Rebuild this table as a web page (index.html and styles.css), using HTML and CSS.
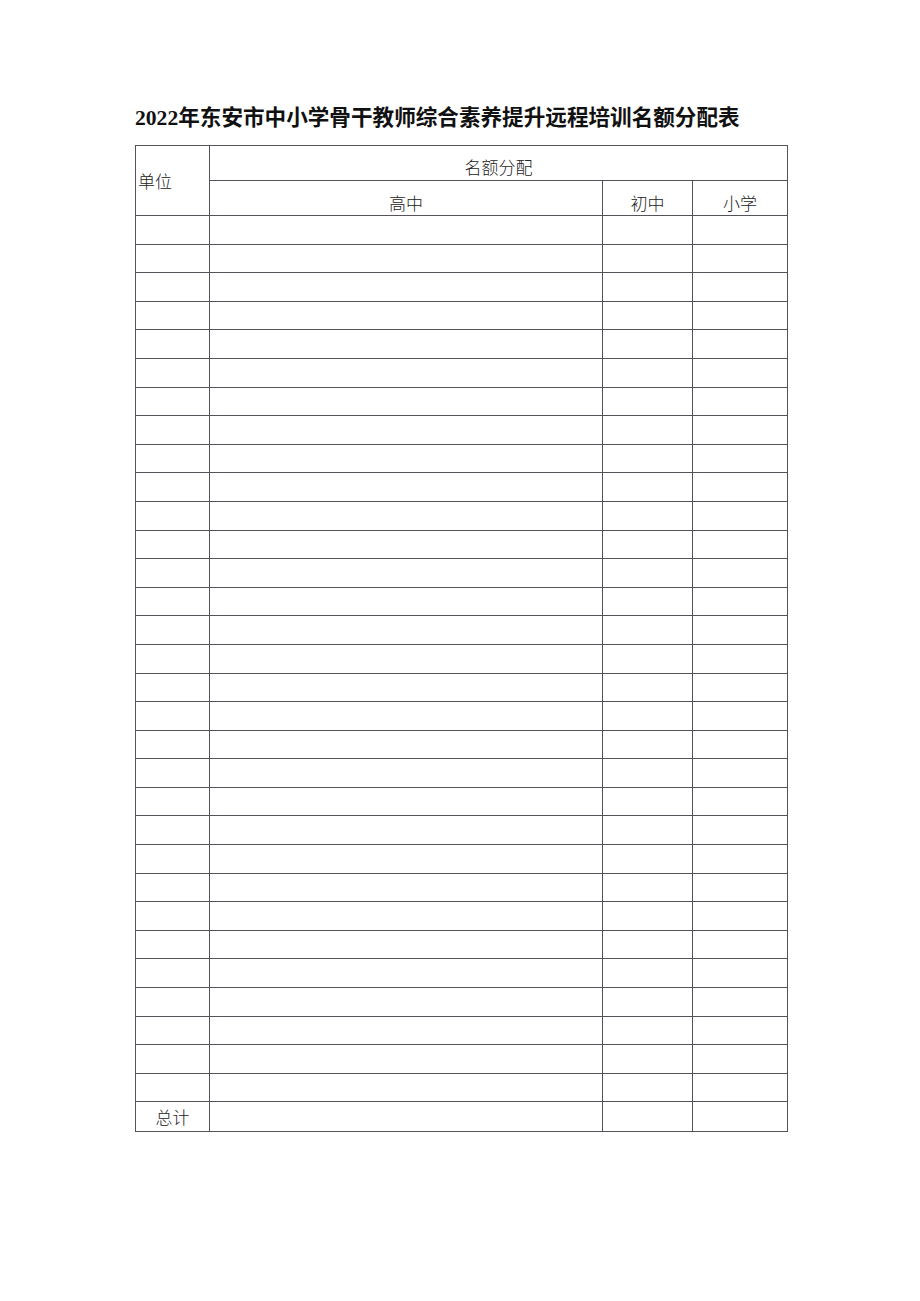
FILE: index.html
```html
<!DOCTYPE html>
<html lang="zh">
<head>
<meta charset="utf-8">
<title>名额分配表</title>
<link rel="stylesheet" href="styles.css">
</head>
<body>
<div class="page">
  <h1 class="title"><span class="num">2022</span>年东安市中小学骨干教师综合素养提升远程培训名额分配表</h1>
  <table class="grid">
    <colgroup>
      <col class="c1"><col class="c2"><col class="c3"><col class="c4">
    </colgroup>
    <tr class="h1">
      <td rowspan="2" class="unit">单位</td>
      <td colspan="3" class="center">名额分配</td>
    </tr>
    <tr class="h2">
      <td class="center">高中</td>
      <td class="center">初中</td>
      <td class="center">小学</td>
    </tr>
    <tr class="r"><td></td><td></td><td></td><td></td></tr>
    <tr class="r"><td></td><td></td><td></td><td></td></tr>
    <tr class="r"><td></td><td></td><td></td><td></td></tr>
    <tr class="r"><td></td><td></td><td></td><td></td></tr>
    <tr class="r"><td></td><td></td><td></td><td></td></tr>
    <tr class="r"><td></td><td></td><td></td><td></td></tr>
    <tr class="r"><td></td><td></td><td></td><td></td></tr>
    <tr class="r"><td></td><td></td><td></td><td></td></tr>
    <tr class="r"><td></td><td></td><td></td><td></td></tr>
    <tr class="r"><td></td><td></td><td></td><td></td></tr>
    <tr class="r"><td></td><td></td><td></td><td></td></tr>
    <tr class="r"><td></td><td></td><td></td><td></td></tr>
    <tr class="r"><td></td><td></td><td></td><td></td></tr>
    <tr class="r"><td></td><td></td><td></td><td></td></tr>
    <tr class="r"><td></td><td></td><td></td><td></td></tr>
    <tr class="r"><td></td><td></td><td></td><td></td></tr>
    <tr class="r"><td></td><td></td><td></td><td></td></tr>
    <tr class="r"><td></td><td></td><td></td><td></td></tr>
    <tr class="r"><td></td><td></td><td></td><td></td></tr>
    <tr class="r"><td></td><td></td><td></td><td></td></tr>
    <tr class="r"><td></td><td></td><td></td><td></td></tr>
    <tr class="r"><td></td><td></td><td></td><td></td></tr>
    <tr class="r"><td></td><td></td><td></td><td></td></tr>
    <tr class="r"><td></td><td></td><td></td><td></td></tr>
    <tr class="r"><td></td><td></td><td></td><td></td></tr>
    <tr class="r"><td></td><td></td><td></td><td></td></tr>
    <tr class="r"><td></td><td></td><td></td><td></td></tr>
    <tr class="r"><td></td><td></td><td></td><td></td></tr>
    <tr class="r"><td></td><td></td><td></td><td></td></tr>
    <tr class="r"><td></td><td></td><td></td><td></td></tr>
    <tr class="r"><td></td><td></td><td></td><td></td></tr>
    <tr class="total">
      <td class="center">总计</td><td></td><td></td><td></td>
    </tr>
  </table>
</div>
</body>
</html>
```
FILE: styles.css
```css
html, body {
  margin: 0;
  padding: 0;
  background: #ffffff;
}
.page {
  padding: 101px 0 0 135px;
  font-family: "Noto Sans CJK SC", "Noto Sans", sans-serif;
  color: #1a1a1a;
}
.title {
  margin: 0 0 12px 0;
  font-size: 21.6px;
  line-height: 30px;
  font-weight: 700;
  letter-spacing: 0;
  color: #111;
  white-space: nowrap;
}
.title .num {
  font-family: "Liberation Serif", "Noto Sans CJK SC", serif;
  font-weight: 700;
}
.grid {
  border-collapse: collapse;
  table-layout: fixed;
  width: 653px;
}
.grid td {
  border: 1px solid #57525a;
  padding: 0;
  font-size: 17px;
  font-weight: 300;
  color: #222;
  line-height: 20px;
}
.c1 { width: 74px; }
.c2 { width: 393px; }
.c3 { width: 90px; }
.c4 { width: 95px; }
.h1 { height: 35px; }
.h2 { height: 35px; }
.h1 td.center { vertical-align: bottom; padding-bottom: 3px; }
.h2 td.center { vertical-align: bottom; padding-bottom: 2px; }
.unit { text-align: left; padding-left: 2px !important; }
.center { text-align: center; }
.r { height: 28.6px; }
.total { height: 30px; }
```
